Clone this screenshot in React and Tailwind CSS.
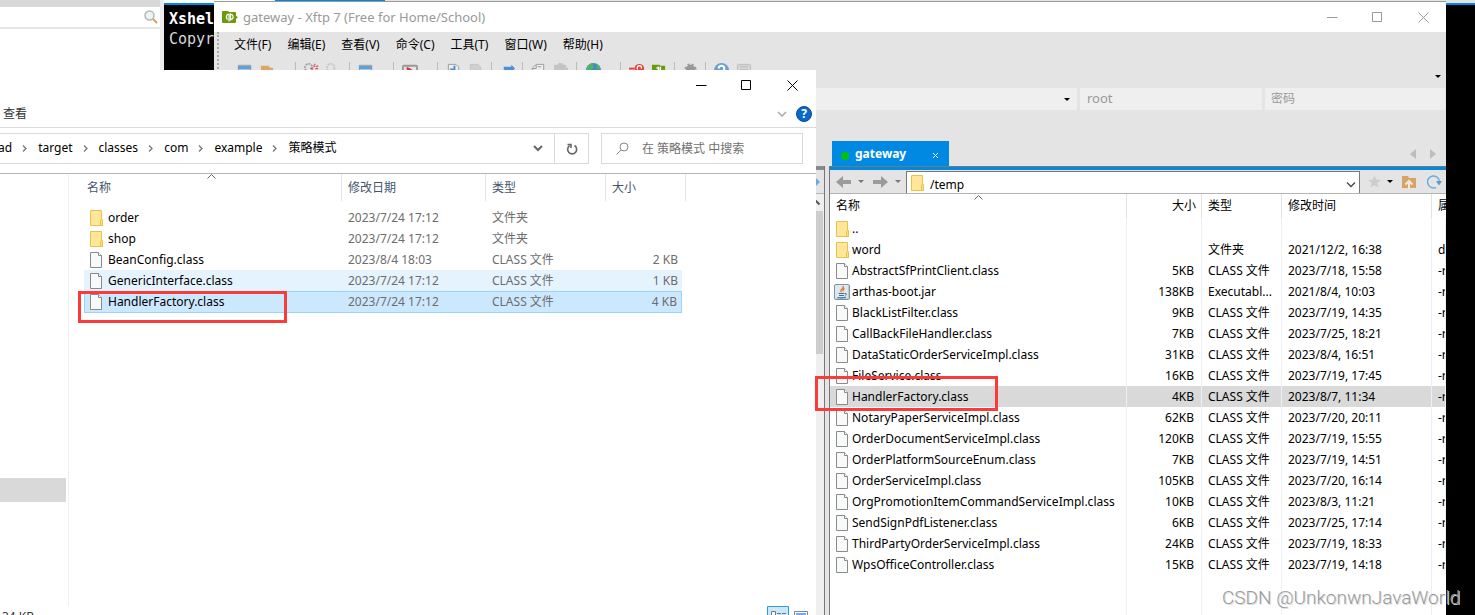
import React from "react";
import { clsx } from "clsx";

const explorerRows = [
  { icon: "folder", name: "order", date: "2023/7/24 17:12", type: "文件夹", size: "" },
  { icon: "folder", name: "shop", date: "2023/7/24 17:12", type: "文件夹", size: "" },
  { icon: "file", name: "BeanConfig.class", date: "2023/8/4 18:03", type: "CLASS 文件", size: "2 KB" },
  { icon: "file", name: "GenericInterface.class", date: "2023/7/24 17:12", type: "CLASS 文件", size: "1 KB", state: "hover" },
  { icon: "file", name: "HandlerFactory.class", date: "2023/7/24 17:12", type: "CLASS 文件", size: "4 KB", state: "selected" },
];

const remoteRows = [
  { icon: "folder", name: "..", size: "", type: "", date: "", attr: "" },
  { icon: "folder", name: "word", size: "", type: "文件夹", date: "2021/12/2, 16:38", attr: "d" },
  { icon: "file", name: "AbstractSfPrintClient.class", size: "5KB", type: "CLASS 文件", date: "2023/7/18, 15:58", attr: "-r" },
  { icon: "jar", name: "arthas-boot.jar", size: "138KB", type: "Executabl...", date: "2021/8/4, 10:03", attr: "-r" },
  { icon: "file", name: "BlackListFilter.class", size: "9KB", type: "CLASS 文件", date: "2023/7/19, 14:35", attr: "-r" },
  { icon: "file", name: "CallBackFileHandler.class", size: "7KB", type: "CLASS 文件", date: "2023/7/25, 18:21", attr: "-r" },
  { icon: "file", name: "DataStaticOrderServiceImpl.class", size: "31KB", type: "CLASS 文件", date: "2023/8/4, 16:51", attr: "-r" },
  { icon: "file", name: "FileService.class", size: "16KB", type: "CLASS 文件", date: "2023/7/19, 17:45", attr: "-r" },
  { icon: "file", name: "HandlerFactory.class", size: "4KB", type: "CLASS 文件", date: "2023/8/7, 11:34", attr: "-r", selected: true },
  { icon: "file", name: "NotaryPaperServiceImpl.class", size: "62KB", type: "CLASS 文件", date: "2023/7/20, 20:11", attr: "-r" },
  { icon: "file", name: "OrderDocumentServiceImpl.class", size: "120KB", type: "CLASS 文件", date: "2023/7/19, 15:55", attr: "-r" },
  { icon: "file", name: "OrderPlatformSourceEnum.class", size: "7KB", type: "CLASS 文件", date: "2023/7/19, 14:51", attr: "-r" },
  { icon: "file", name: "OrderServiceImpl.class", size: "105KB", type: "CLASS 文件", date: "2023/7/20, 16:14", attr: "-r" },
  { icon: "file", name: "OrgPromotionItemCommandServiceImpl.class", size: "10KB", type: "CLASS 文件", date: "2023/8/3, 11:21", attr: "-r" },
  { icon: "file", name: "SendSignPdfListener.class", size: "6KB", type: "CLASS 文件", date: "2023/7/25, 17:14", attr: "-r" },
  { icon: "file", name: "ThirdPartyOrderServiceImpl.class", size: "24KB", type: "CLASS 文件", date: "2023/7/19, 18:33", attr: "-r" },
  { icon: "file", name: "WpsOfficeController.class", size: "15KB", type: "CLASS 文件", date: "2023/7/19, 14:18", attr: "-r" },
];

const menus = ["文件(F)", "编辑(E)", "查看(V)", "命令(C)", "工具(T)", "窗口(W)", "帮助(H)"];
const crumbs = ["ad", "target", "classes", "com", "example", "策略模式"];

const FileIcon = ({ kind }) => {
  if (kind === "folder") {
    return (
      <svg className="h-4 w-4 shrink-0" viewBox="0 0 16 16">
        <path d="M2.500.5h11v9h1v6h-12z" fill="#ffe699" stroke="#e8c34c" />
        <path d="M12.500 15.500v-5q0-1 1-1t1 1v5z" fill="#ffe07a" stroke="#e8c34c" />
      </svg>
    );
  }
  if (kind === "jar") {
    return (
      <svg className="h-4 w-4 shrink-0" viewBox="0 0 16 16">
        <rect x=".5" y=".5" width="15" height="15" rx="1.5" fill="#dfe8ef" stroke="#7d93a6" />
        <path d="M1.500 14.500h13v-13" fill="none" stroke="#b7c9d8" />
        <path d="M9 2q1 1.500-1 3t-.5 3M10.500 4.500q-2 1-1.500 3" fill="none" stroke="#e8762c" strokeWidth="1.300" />
        <path d="M4.500 9.500h6M5 11.500h5M3.500 13.500q4.500 1 8.500-.5M11 9.500q2 0 .5 2" fill="none" stroke="#3f6d99" strokeWidth="1.100" />
      </svg>
    );
  }
  return (
    <svg className="h-4 w-4 shrink-0" viewBox="0 0 16 16">
      <path d="M2.500.5h8l3 3v12h-11z" fill="#f8f9f9" stroke="#8a8a8a" />
      <path d="M10.500.5v3h3" fill="#fff" stroke="#8a8a8a" />
    </svg>
  );
};

const SortMark = () => (
  <svg className="h-[5px] w-[9px]" viewBox="0 0 9 5">
    <path d="M.5 4.500l4-4 4 4" fill="none" stroke="#666" />
  </svg>
);

const DownMark = ({ className }) => (
  <svg className={clsx("h-[3px] w-[6px] shrink-0", className)} viewBox="0 0 6 3">
    <path d="M0 0h6l-3 3z" fill="currentColor" />
  </svg>
);

const WindowButtons = ({ className }) => (
  <div className={clsx("flex h-[30px] items-center", className)}>
    <button aria-label="最小化" className="flex h-full w-[45px] items-center justify-center">
      <svg className="h-[11px] w-[11px]" viewBox="0 0 11 11">
        <path d="M0 5.500h10.500" stroke="currentColor" />
      </svg>
    </button>
    <button aria-label="最大化" className="flex h-full w-[45px] items-center justify-center">
      <svg className="h-[11px] w-[11px]" viewBox="0 0 11 11">
        <path d="M.5.5h9v9h-9z" fill="none" stroke="currentColor" />
      </svg>
    </button>
    <button aria-label="关闭" className="flex h-full w-[46px] items-center justify-center">
      <svg className="h-[11px] w-[11px]" viewBox="0 0 11 11">
        <path d="M.5.5l10 10M10.500.5l-10 10" stroke="currentColor" />
      </svg>
    </button>
  </div>
);

const toolIcons = {
  session: (
    <>
      <path d="M1.500 3.500h13v11h-13z" fill="#f4f4f4" stroke="#999" />
      <path d="M1 4h14v4h-14z" fill="#62a0d6" />
    </>
  ),
  folder: <path d="M2 4h8l2 2h3v9h-13z" fill="#d9a964" />,
  reconnect: (
    <>
      <circle cx="5" cy="6" r="4" fill="none" stroke="#a0a0a0" strokeWidth="2" strokeDasharray="2 1" />
      <path d="M10 4l2 1M12 2l-1 1M13 5l2-1M7 6l2 2M12 7h3" stroke="#e0485a" strokeWidth="1.500" />
    </>
  ),
  disconnect: <circle cx="5" cy="6" r="4" fill="none" stroke="#c6c6c6" strokeWidth="2" strokeDasharray="2 1" />,
  play: (
    <>
      <rect x="1" y="4" width="15" height="10" rx="1" fill="#e6e6e6" stroke="#999" strokeWidth="2" />
      <path d="M5 5l6 3-6 3z" fill="#d0344a" />
    </>
  ),
  page: (
    <>
      <path d="M2.500 2.500h8l3 3v9h-11z" fill="#ededed" stroke="#999" />
      <path d="M9 4v4h-3l3 3" fill="none" stroke="#4c8bd0" strokeWidth="2" />
    </>
  ),
  pageOff: <path d="M2.500 2.500h8l3 3v9h-11z" fill="#cfcfcf" stroke="#c3c3c3" />,
  arrow: <path d="M4 5h8V3l4 4-4 4v-2H4z" fill="#4f8fd6" />,
  copy: <path d="M1.500 6.500l4-4h8v8h-3v4h-9zM5.500 3v4h-4M7 5h4" fill="#eee" stroke="#999" />,
  paste: <path d="M1 3h4l1-2h4l1 2h3v3h2v8h-15z" fill="#c4c4c4" />,
  globe: (
    <>
      <circle cx="9" cy="9" r="8" fill="#4a88cb" />
      <path d="M2 6q3-5 7-5-1 3 0 5-3 3-7 4zM12 2q4 1 4 5l-3 1z" fill="#4cb85c" />
    </>
  ),
  refresh: (
    <>
      <path d="M0 7h6" stroke="#ef3a35" strokeWidth="2" />
      <circle cx="11" cy="7" r="5" fill="#ef3a35" />
      <path d="M9 8q-1-4 2-4t2 3" fill="none" stroke="#fff" strokeWidth="1.500" />
    </>
  ),
  xftp: (
    <>
      <path d="M1 3h8l1 1h5v10h-14z" fill="#6b9a0b" />
      <path d="M8 5v7M8 5l-2 2M10 5v6" stroke="#fff" strokeWidth="1.500" />
    </>
  ),
  gear: <circle cx="8" cy="8" r="5" fill="#999" stroke="#999" strokeWidth="3" strokeDasharray="2 2" />,
  help: (
    <>
      <circle cx="8" cy="9" r="8" fill="#6b9fd2" />
      <path d="M5 7q0-3 3-3t3 3-3 4" fill="none" stroke="#fff" strokeWidth="2" />
    </>
  ),
  keyboard: <path d="M1.500 3.500q0-1 1-1h12q1 0 1 1v10h-14zM4 5h9M4 8h9" fill="#d6d6d6" stroke="#bbb" />,
};

const toolGroups = [
  { icons: ["session", "folder"], width: "w-[67px]" },
  { icons: ["reconnect", "disconnect"], width: "w-[54px]" },
  { icons: ["session"], width: "w-[44px]" },
  { icons: ["play"], width: "w-[44px]" },
  { icons: ["page", "pageOff"], width: "w-[54px]" },
  { icons: ["arrow"], width: "w-[31px]" },
  { icons: ["copy", "paste"], width: "w-[54px]" },
  { icons: ["globe"], width: "w-[44px]" },
  { icons: ["refresh", "xftp"], width: "w-[54px]" },
  { icons: ["gear"], width: "w-[31px]" },
  { icons: ["help", "keyboard"], width: "w-[54px]" },
];

const Background = () => (
  <div className="flex h-full">
    <div className="w-[160px] bg-white">
      <div className="h-[7px] bg-[#d8d8d8]" />
      <div className="flex h-[22px] items-center justify-end border-b-2 border-[#e5e5e5] pr-[2px]">
        <svg className="h-[14px] w-[14px]" viewBox="0 0 14 14">
          <circle cx="5.500" cy="5.500" r="4.500" fill="#eef3f6" stroke="#b4b8ba" strokeWidth="1.500" />
          <path d="M9 9l4 4" stroke="#d9a05c" strokeWidth="2" />
        </svg>
      </div>
    </div>
    <div className="w-1 bg-[#ececec]" />
    <div className="flex-1">
      <div className="flex h-[3px] bg-[#e4e4e4]">
        <div className="w-[110px] bg-white" />
        <div className="ml-px w-[110px] bg-[#0089e3]" />
      </div>
      <div className="h-[2px] bg-[#0089e3]" />
      <pre className="pt-1 pl-[5px] font-['DejaVu_Sans_Mono',monospace] text-[15px] leading-5 text-[#d8d8d8]">
        <b className="text-white">Xshel</b>
        {"\nCopyr"}
      </pre>
    </div>
  </div>
);

const RemotePane = () => (
  <div className="flex min-w-0 flex-1 flex-col">
    <div className="flex h-[25px] items-end justify-between pl-[3px]">
      <button className="flex h-full w-[117px] items-center bg-[#0089e3] pl-[9px] text-white">
        <span className="mt-1 h-2 w-2 rounded-full bg-[#00c20a]" />
        <span className="ml-[6px] flex-1 text-left text-[12px] font-bold">gateway</span>
        <svg className="mt-1 mr-[10px] h-[7px] w-[7px]" viewBox="0 0 7 7">
          <path d="M1 1l5 5M6 1l-5 5" stroke="#fff" />
        </svg>
      </button>
      <div className="flex items-center gap-[14px] self-center pr-[10px]">
        <svg className="h-[10px] w-[6px]" viewBox="0 0 6 10"><path d="M6 0v10L0 5z" fill="#bdbdbd" /></svg>
        <svg className="h-[10px] w-[6px]" viewBox="0 0 6 10"><path d="M0 0v10l6-5z" fill="#bdbdbd" /></svg>
      </div>
    </div>
    <div className="flex flex-1 flex-col border-t border-l border-[#777]">
      <div className="h-[3px] shrink-0 bg-[#0089e3]" />
      <div className="flex h-6 shrink-0 items-center border-b border-[#b4b4b4] pl-[6px] text-[#999]">
        <button aria-label="后退">
          <svg className="h-3 w-4" viewBox="0 0 16 12"><path d="M0 6l7-6v4h8v4H7v4z" fill="#9b9b9b" /></svg>
        </button>
        <DownMark className="ml-[6px] text-[#777]" />
        <button aria-label="前进" className="ml-[9px]">
          <svg className="h-3 w-4" viewBox="0 0 16 12"><path d="M15 6L8 0v4H0v4h8v4z" fill="#9b9b9b" /></svg>
        </button>
        <DownMark className="ml-[6px] text-[#777]" />
        <div className="ml-[5px] flex h-[22px] flex-1 items-center self-end border border-b-0 border-[#777] bg-white pl-[2px]">
          <FileIcon kind="folder" />
          <input aria-label="路径" defaultValue="/temp" className="ml-[5px] min-w-0 flex-1 bg-transparent pt-1 text-black outline-none" />
          <svg className="mt-1 mr-[3px] h-[6px] w-[10px]" viewBox="0 0 10 6">
            <path d="M1 .5l4 4 4-4" fill="none" stroke="#444" strokeWidth="1.300" />
          </svg>
        </div>
        <svg className="ml-2 h-[13px] w-[13px]" viewBox="0 0 14 13">
          <path d="M7 0l2 4.500 5 .5-4 3 1.500 5L7 10.500 2.500 13 4 8 0 5l5-.5z" fill="#cdcdcd" />
        </svg>
        <DownMark className="ml-[6px] text-black" />
        <button aria-label="上级目录" className="ml-[9px]">
          <svg className="h-[14px] w-[15px]" viewBox="0 0 15 14">
            <path d="M0 1h6l1 2h7v10H0z" fill="#d6a469" />
            <path d="M7 14V8M3.500 9.500L7 6l3.500 3.500" fill="none" stroke="#f5e9da" strokeWidth="2" />
          </svg>
        </button>
        <button aria-label="刷新" className="mr-1 ml-[10px]">
          <svg className="h-[14px] w-[15px]" viewBox="0 0 15 14">
            <path d="M9 12.400A6 6 0 1 1 12.500 7" fill="none" stroke="#6da9dc" strokeWidth="1.500" />
            <path d="M9 6h6l-3 4.500z" fill="#5b9bd5" />
          </svg>
        </button>
      </div>
      <div className="relative flex flex-1 flex-col overflow-hidden bg-white">
        <div className="absolute top-px left-[144px]">
          <SortMark />
        </div>
        <table className="w-full table-fixed border-collapse text-left text-black">
          <colgroup>
            <col />
            <col className="w-[75px]" />
            <col className="w-[80px]" />
            <col className="w-[150px]" />
            <col className="w-[14px]" />
          </colgroup>
          <thead>
            <tr className="h-6 [&>th]:p-0 [&>th]:font-normal">
              <th className="border-r border-[#e2e2e2]"><span className="pl-[6px]">名称</span></th>
              <th className="border-r border-[#e2e2e2] text-right"><span className="pr-[5px]">大小</span></th>
              <th className="border-r border-[#e2e2e2]"><span className="pl-[6px]">类型</span></th>
              <th className="border-r border-[#e2e2e2]"><span className="pl-[6px]">修改时间</span></th>
              <th className="overflow-hidden whitespace-nowrap"><span className="pl-[6px]">属</span></th>
            </tr>
          </thead>
          <tbody>
            {remoteRows.map((row) => (
              <tr key={row.name} className={clsx("h-[21px] whitespace-nowrap [&>td]:border-r [&>td]:border-[#eaf1f9] [&>td]:p-0", row.selected && "bg-[#d9d9d9]")}>
                <td>
                  <div className="flex h-[21px] items-center gap-[2px] pl-1">
                    <FileIcon kind={row.icon} />
                    {row.name}
                  </div>
                </td>
                <td className="text-right"><span className="pr-[7px]">{row.size}</span></td>
                <td><span className="pl-[6px]">{row.type}</span></td>
                <td><span className="pl-[6px]">{row.date}</span></td>
                <td className="overflow-hidden"><span className="pl-[6px]">{row.attr}</span></td>
              </tr>
            ))}
          </tbody>
        </table>
        <div className="flex flex-1">
          <div className="flex-1 border-r border-[#eaf1f9]" />
          <div className="w-[75px] border-r border-[#eaf1f9]" />
          <div className="w-[80px] border-r border-[#eaf1f9]" />
          <div className="w-[150px] border-r border-[#eaf1f9]" />
          <div className="w-[14px]" />
        </div>
      </div>
    </div>
  </div>
);

const XftpWindow = () => (
  <section className="absolute top-px right-[29px] bottom-0 left-[214px] flex flex-col overflow-hidden border-t border-[#999] bg-[#e4e4e4]">
    <header className="flex h-[30px] shrink-0 items-center bg-white pl-2 text-[#999]">
      <svg className="h-[14px] w-4" viewBox="0 0 16 14">
        <path d="M0 2q0-1 1-1h5l1 1h6q1 0 1 1v3l2 1-2 2v3q0 1-1 1H1q-1 0-1-1z" fill="#6b9a0b" />
        <path d="M5.500 9.500q-2-2-.5-4.500 1-1 2-1v7.500M8.500 3.500v7M8.500 9.500q3-.5 2.500-3t-2.500-2" fill="none" stroke="#fff" strokeWidth="1.200" />
      </svg>
      <h1 className="ml-[5px] flex-1 text-[13px]">gateway - Xftp 7 (Free for Home/School)</h1>
      <WindowButtons />
    </header>
    <div className="flex h-14 shrink-0">
      <div className="w-[5px] shrink-0 border-r-2 border-dotted border-[#aaa]" />
      <div className="flex flex-1 flex-col">
        <nav className="flex h-[25px] items-center gap-4 pl-[15px] text-black">
          {menus.map((m) => (
            <button key={m}>{m}</button>
          ))}
        </nav>
        <div className="flex items-start pt-[5px] pl-[10px]">
          {toolGroups.map((group, i) => (
            <div key={i} className={clsx("flex h-5 items-start gap-[6px] pl-2", group.width, i < 10 && "border-r border-[#bbb]")}>
              {group.icons.map((name) => (
                <button key={name} aria-label={name}>
                  <svg className="block h-4 w-4" viewBox="0 0 17 17">{toolIcons[name]}</svg>
                </button>
              ))}
            </div>
          ))}
          <DownMark className="mt-[13px] mr-[5px] ml-auto text-black" />
        </div>
      </div>
    </div>
    <div className="flex h-[22px] shrink-0 gap-[3px] pr-px text-[#999]">
      <div className="flex flex-1 items-center justify-end bg-[#efefef] pr-[7px]">
        <DownMark className="text-black" />
      </div>
      <input aria-label="用户名" defaultValue="root" className="w-[182px] bg-[#efefef] pb-[2px] pl-[7px] text-[13px] outline-none" />
      <input aria-label="密码" placeholder="密码" className="w-[180px] bg-[#efefef] pl-[6px] outline-none placeholder:text-[#999]" />
    </div>
    <div className="flex min-h-0 flex-1 pt-[31px]">
      <div className="mt-[25px] flex w-[611px] shrink-0 flex-col border-r border-[#777]">
        <div className="h-1 bg-[#8a8a8a]" />
        <div className="flex h-6 items-center justify-end border-b border-[#b4b4b4] pr-1">
          <svg className="h-3 w-3" viewBox="0 0 12 12"><path d="M6 0l6 6-6 6z" fill="#6da9dc" /></svg>
        </div>
        <div className="flex flex-1 flex-col items-end bg-white">
          <div className="flex w-[17px] flex-1 flex-col items-center bg-[#efefef]">
            <svg className="my-[6px] h-[5px] w-[9px]" viewBox="0 0 9 5"><path d="M.5 4.500l4-4 4 4" fill="none" stroke="#555" strokeWidth="2" /></svg>
            <div className="h-[143px] w-[15px] bg-[#cdcdcd]" />
          </div>
        </div>
      </div>
      <div className="w-1 shrink-0" />
      <RemotePane />
    </div>
  </section>
);

const ExplorerWindow = () => (
  <section className="absolute top-[70px] bottom-0 left-0 flex w-[816px] flex-col overflow-hidden bg-white text-black">
    <header className="flex justify-end pr-px">
      <WindowButtons />
    </header>
    <div className="flex h-7 shrink-0 items-center border-b border-[#dadada] pr-1 pl-[3px]">
      <button className="text-[#333]">查看</button>
      <svg className="mr-[9px] ml-auto h-[6px] w-[10px]" viewBox="0 0 10 6">
        <path d="M1 1l4 4 4-4" fill="none" stroke="#aaa" strokeWidth="1.500" />
      </svg>
      <button aria-label="帮助" className="flex h-4 w-4 items-center justify-center rounded-full border border-[#0a4d91] bg-[#0a69c7] text-[12px] font-bold text-white">
        ?
      </button>
    </div>
    <div className="flex h-[46px] shrink-0 border-b border-[#b5b5b5] pt-[5px] pr-[13px] pb-[9px]">
      <div className="flex flex-1 items-center border border-l-0 border-[#d9d9d9]">
        <nav className="-ml-[2px] flex items-center pb-[2px]">
          {crumbs.map((c, i) => (
            <React.Fragment key={c}>
              {i > 0 && (
                <svg className="mt-[2px] mr-[11px] ml-[10px] h-[7px] w-[5px]" viewBox="0 0 5 7">
                  <path d="M1 .5l3 3-3 3" fill="none" stroke="#777" strokeWidth="1.300" />
                </svg>
              )}
              <button>{c}</button>
            </React.Fragment>
          ))}
        </nav>
        <svg className="mr-[11px] ml-auto h-[7px] w-[10px]" viewBox="0 0 10 7">
          <path d="M1 1l4 4 4-4" fill="none" stroke="#666" strokeWidth="2" />
        </svg>
        <button aria-label="刷新" className="flex h-full w-[34px] items-center justify-center border-l border-[#d9d9d9]">
          <svg className="h-3 w-3" viewBox="0 0 12 12">
            <path d="M8.500 2.500A4.500 4.500 0 1 1 3.500 2.700M1.500 1.500h3.500v3.500" fill="none" stroke="#666" strokeWidth="1.600" />
          </svg>
        </button>
      </div>
      <div className="ml-3 flex w-[202px] items-center border border-[#d9d9d9] pl-[14px]">
        <svg className="h-[13px] w-[13px]" viewBox="0 0 13 13">
          <circle cx="8" cy="5" r="4" fill="none" stroke="#888" />
          <path d="M5 8L.5 12.500" stroke="#888" />
        </svg>
        <input aria-label="搜索" placeholder="在 策略模式 中搜索" className="ml-[13px] min-w-0 flex-1 outline-none placeholder:text-[#707070]" />
      </div>
    </div>
    <div className="flex min-h-0 flex-1">
      <aside className="w-[69px] shrink-0 border-r border-[#f0f0f0]">
        <div className="mt-[304px] h-6 w-[66px] bg-[#d9d9d9]" />
      </aside>
      <main className="relative pl-[15px]">
        <div className="absolute top-0 left-[138px]">
          <SortMark />
        </div>
        <table className="w-[602px] table-fixed border-separate border-spacing-0 text-left text-[#6d6d6d]">
          <colgroup>
            <col className="w-[258px]" />
            <col className="w-[144px]" />
            <col className="w-[120px]" />
            <col className="w-[76px]" />
            <col className="w-1" />
          </colgroup>
          <thead>
            <tr className="h-[27px] text-[#44546f] [&>th]:p-0 [&>th]:font-normal">
              <th className="border-r border-[#e5e5e5]"><span className="pl-[3px]">名称</span></th>
              <th className="border-r border-[#e5e5e5]"><span className="pl-[6px]">修改日期</span></th>
              <th className="border-r border-[#e5e5e5]"><span className="pl-[6px]">类型</span></th>
              <th><span className="pl-[6px]">大小</span></th>
              <th className="border-r border-[#e5e5e5]" />
            </tr>
          </thead>
          <tbody>
            <tr className="h-[6px]" />
            {explorerRows.map((row) => (
              <tr
                key={row.name}
                className={clsx(
                  "h-[21px] [&>td]:p-0",
                  row.state === "hover" && "[&>td]:bg-[#e5f3ff]",
                  row.state === "selected" && "[&>td]:border-y [&>td]:border-[#99d1ff] [&>td]:bg-[#cce8ff] [&>td:first-child]:border-l [&>td:last-child]:border-r"
                )}
              >
                <td>
                  <div className={clsx("flex items-center gap-1", row.state === "selected" ? "h-5 pl-[3px]" : "h-[21px] pl-1")}>
                    <FileIcon kind={row.icon} />
                    <span className="text-black">{row.name}</span>
                  </div>
                </td>
                <td><span className="pl-[6px]">{row.date}</span></td>
                <td><span className="pl-[6px]">{row.type}</span></td>
                <td className="text-right"><span className="pr-1">{row.size}</span></td>
              </tr>
            ))}
          </tbody>
        </table>
        <div className="absolute top-[117px] left-[9px] h-8 w-[209px] border-3 border-[#fb3a3a]" />
      </main>
    </div>
    <footer className="flex h-[9px] shrink-0 items-start gap-[10px] pr-2 pl-[2px] text-[#333]">
      <span className="mt-[2px] flex-1">34 KB</span>
      <svg className="h-[22px] w-[22px]" viewBox="0 0 22 22">
        <path d="M.5.5h21v21H.5z" fill="#cbe8f6" stroke="#26a0da" />
        <path d="M4.500 5.500h4v4h-4zM10 7.500h4M15 7.500h4" fill="#fff" stroke="#777" />
      </svg>
      <svg className="mt-[5px] -ml-[5px] h-3 w-[14px]" viewBox="0 0 14 12">
        <path d="M.5.5h13v11H.5z" fill="#fff" stroke="#888" />
        <path d="M2 2h10v8H2z" fill="#76a9f5" />
      </svg>
    </footer>
  </section>
);

const App = () => {
  return (
    <div className="relative h-screen w-full overflow-hidden bg-black font-['Noto_Sans','Noto_Sans_CJK_SC',sans-serif] text-[12px] leading-[18px]">
      <Background />
      <XftpWindow />
      <ExplorerWindow />
      <div className="absolute top-[376px] left-[815px] h-[35px] w-[183px] border-3 border-[#fb3a3a]" />
      <div className="absolute right-[15px] bottom-[5px] font-[Roboto,sans-serif] text-[19px] leading-6 font-light text-[#999] [text-shadow:1px_1px_0_#ddd]">
        CSDN @UnkonwnJavaWorld
      </div>
    </div>
  );
};

export default App;
